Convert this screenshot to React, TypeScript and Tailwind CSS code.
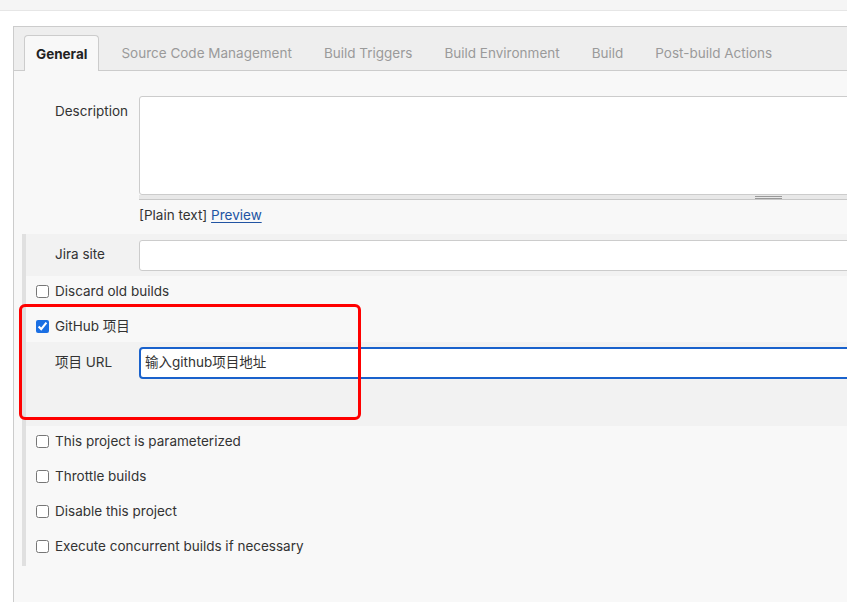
const tabs = [
  "Source Code Management",
  "Build Triggers",
  "Build Environment",
  "Build",
  "Post-build Actions",
];

const moreOptions = [
  "This project is parameterized",
  "Throttle builds",
  "Disable this project",
  "Execute concurrent builds if necessary",
];

function CheckRow({ label, checked = false, h = "h-[35px]" }: { label: string; checked?: boolean; h?: string }) {
  return (
    <label className={`flex items-start gap-[6px] pl-[10px] pt-[7px] ${h}`}>
      <input
        type="checkbox"
        defaultChecked={checked}
        className="m-0 mt-[2px] w-[13px] h-[13px] accent-[#1b6fe3]"
      />
      <span className="leading-[17px]">{label}</span>
    </label>
  );
}

export default function App() {
  return (
    <div className="relative w-[847px] h-[602px] overflow-hidden bg-white text-[13.5px] text-[#333] font-['Inter','Noto_Sans_CJK_SC',sans-serif]">
      {/* top strip */}
      <div className="h-[11px] bg-[#f5f5f5] border-b border-[#e6e6e6]" />

      <div className="pt-[15px] pl-[13px]">
        <div className="w-[900px] min-h-[580px] border-l border-t border-[#cccccc] bg-[#f8f8f8]">
          {/* tab strip */}
          <div className="h-[44px] bg-[#eeeeee] border-b border-[#cccccc] flex items-end pl-[10px]">
            <div className="h-[36px] -mb-px px-[11px] pt-[2px] flex items-center border border-b-0 border-[#cccccc] rounded-t-[4px] bg-[#f8f8f8] font-bold text-[#222]">
              General
            </div>
            <div className="flex h-[36px] pt-[3px] items-center pl-[6px]">
              {tabs.map((t) => (
                <span key={t} className="px-[16px] text-[#9a9a9a]">
                  {t}
                </span>
              ))}
            </div>
          </div>

          {/* description */}
          <div className="pt-[25px] pl-[41px] flex">
            <div className="w-[84px] pt-[5px]">Description</div>
            <div className="flex-1">
              <div className="h-[99px] bg-white border border-[#cccccc] rounded-[3px]" />
              <div className="relative h-[5px] bg-[#e8e8e8] border-b border-[#c8c8c8]">
                <div className="absolute left-[616px] top-[1px] w-[27px] h-[3px] border-t border-b border-[#999]" />
              </div>
              <div className="pt-[6px] leading-[19px]">
                [Plain text]{" "}
                <a className="text-[#2154a3] underline underline-offset-2">Preview</a>
              </div>
            </div>
          </div>

          {/* options section */}
          <div className="mt-[9px] ml-[8px] border-l-4 border-[#e0e0e0]">
            <div className="h-[42px] bg-[#f2f2f2] flex items-center pl-[29px]">
              <div className="w-[84px] pb-[1px]">Jira site</div>
              <div className="flex-1 h-[31px] bg-white border border-[#cccccc] rounded-[3px]" />
            </div>

            <CheckRow label="Discard old builds" />
            <CheckRow label="GitHub 项目" checked h="h-[31px]" />

            <div className="h-[84px] bg-[#f2f2f2] pt-[5px] pl-[29px] flex items-start">
              <div className="w-[84px] pt-[5px]">项目 URL</div>
              <div className="flex-1 h-[32px] bg-white border-2 border-[#1a62cc] rounded-[4px] flex items-center pl-[4px] pb-[1px]">
                输入github项目地址
              </div>
            </div>

            {moreOptions.map((o) => (
              <CheckRow key={o} label={o} />
            ))}
          </div>
        </div>
      </div>

      {/* annotation */}
      <div className="absolute left-[19px] top-[304px] w-[342px] h-[116px] border-[3px] border-[#ff0000] rounded-[6px] pointer-events-none" />
    </div>
  );
}
